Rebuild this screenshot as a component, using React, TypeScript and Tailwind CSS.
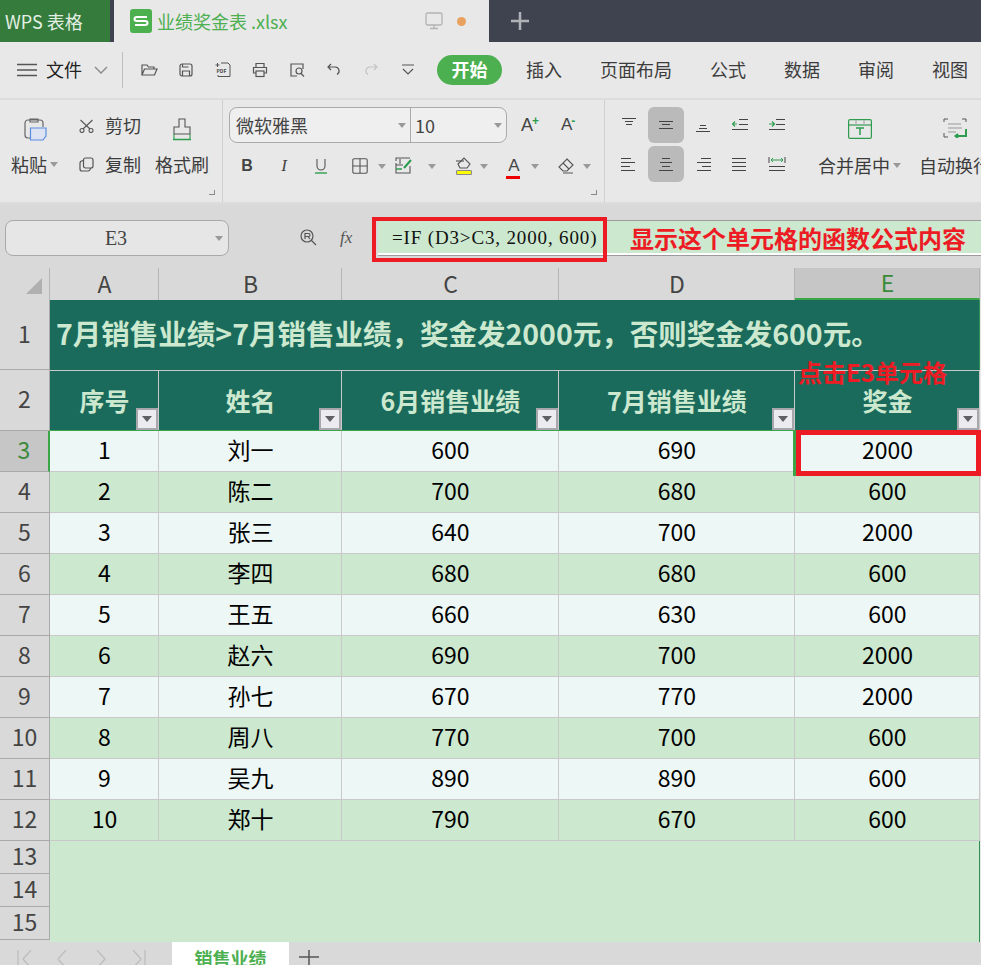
import type {ReactNode} from "react";

const ui = "font-['Noto_Sans_CJK_SC','Noto_Sans',sans-serif]";
const colWidths = ["w-[109px]", "w-[183px]", "w-[217px]", "w-[236px]", "w-[185px]"];

const rows = [
  ["1", "刘一", "600", "690", "2000"],
  ["2", "陈二", "700", "680", "600"],
  ["3", "张三", "640", "700", "2000"],
  ["4", "李四", "680", "680", "600"],
  ["5", "王五", "660", "630", "600"],
  ["6", "赵六", "690", "700", "2000"],
  ["7", "孙七", "670", "770", "2000"],
  ["8", "周八", "770", "700", "600"],
  ["9", "吴九", "890", "890", "600"],
  ["10", "郑十", "790", "670", "600"],
];

function Icon({size = 20, children}: {size?: number; children: ReactNode}) {
  return (
    <svg width={size} height={size} viewBox="0 0 20 20" fill="none" stroke="#555" strokeWidth="1.2">
      {children}
    </svg>
  );
}

function Caret({className = ""}: {className?: string}) {
  return <span className={`inline-block h-0 w-0 border-x-[4px] border-t-[5px] border-x-transparent border-t-[#999] ${className}`} />;
}

function Launcher() {
  return <span className="absolute bottom-[7px] right-[7px] h-[5px] w-[6px] border-b border-r border-[#888]" />;
}

function QuickIcons() {
  const icons = [
    <path key="open" d="M3 15V5h5l1.5 2H15v2M3 15l2.5-6H18l-2.5 6z" />,
    <g key="save"><rect x="4" y="4" width="12" height="12" rx="2" /><path d="M6.500 16v-5h7v5M6.500 4v3h6" /></g>,
    <g key="pdf"><path d="M8 3h7l2 2v11.500H5V15" strokeWidth="1" /><path d="M2.500 5h4M4.500 3v4" strokeWidth="1" /><text x="3.500" y="12.500" fontSize="5" fontWeight="700" fill="#444" stroke="none">PDF</text></g>,
    <g key="print"><path d="M6 7V3.500h8V7M6 13H3.500V7.500h13V13H14" /><rect x="6" y="11" width="8" height="5.500" /></g>,
    <g key="preview"><path d="M16 9V4H4v12h6" /><circle cx="12" cy="11" r="3" /><path d="m14 13.500 3 3" /></g>,
    <path key="undo" d="M7 4 4 7l3 3M4 7h7a4 4 0 0 1 2 7.500" />,
    <path key="redo" d="m13 4 3 3-3 3M16 7H9a4 4 0 0 0-2 7.500" stroke="#c4c4c4" />,
    <path key="more" d="M4 5h12M5 9l5 5 5-5" />,
  ];
  return (
    <div className="ml-[7px] flex">
      {icons.map((icon, i) => (
        <span key={i} className="flex w-[37px] justify-center">
          <Icon>{icon}</Icon>
        </span>
      ))}
    </div>
  );
}

function TopTabs() {
  return (
    <div className="flex h-[42px] bg-[#3f434f]">
      <div className="flex w-[110px] items-center bg-[#357c3c] pl-[5px] text-[18px] text-[#e3efe4]">WPS 表格</div>
      <div className="ml-[4px] flex w-[375px] items-center bg-[#e8e8e8] pl-[16px]">
        <span className="flex h-[24px] w-[22px] items-center justify-center rounded-[3px] bg-[#4cb04f]">
          <svg width="16" height="12" viewBox="0 0 16 12" fill="none" stroke="#fff" strokeWidth="2">
            <path d="M14 2H4Q1.500 2 1.500 4T4 6h8q2.500 0 2.500 2T12 10H2" />
          </svg>
        </span>
        <span className="ml-[5px] text-[18px] text-[#4caf50]">业绩奖金表 .xlsx</span>
        <span className="ml-[137px]">
          <svg width="18" height="18" viewBox="0 0 18 18" fill="none" stroke="#b3b3b3" strokeWidth="1.300">
            <rect x="1" y="1" width="16" height="12" rx="1.500" />
            <path d="M9 13v3.500M5 16.500h8" />
          </svg>
        </span>
        <span className="ml-[14px] h-[9px] w-[9px] rounded-full bg-[#e9a15f]" />
      </div>
      <div className="ml-[22px] flex items-center">
        <svg width="18" height="18" viewBox="0 0 18 18" stroke="#b0b2b8" strokeWidth="2.500">
          <path d="M9 0v18M0 9h18" />
        </svg>
      </div>
    </div>
  );
}

function MenuBar() {
  return (
    <div className="flex h-[58px] items-center border-b-[2px] border-[#dcdcdc] bg-[#e8e8e8] text-[18px] text-[#3c3c3c]">
      <svg className="ml-[17px]" width="20" height="14" viewBox="0 0 20 14" stroke="#555" strokeWidth="1.500">
        <path d="M0 1.500h20M0 7h20M0 12.500h20" />
      </svg>
      <span className="ml-[9px] pb-[2px] text-[#222]">文件</span>
      <svg className="ml-[12px]" width="14" height="8" viewBox="0 0 14 8" fill="none" stroke="#888" strokeWidth="1.300">
        <path d="m1 1 6 6 6-6" />
      </svg>
      <span className="ml-[14px] h-[36px] w-px bg-[#bdbdbd]" />
      <QuickIcons />
      <span className="ml-[11px] flex h-[30px] w-[65px] items-center justify-center rounded-full bg-[#4caf50] pb-[1px] font-bold text-white">开始</span>
      <div className="ml-[24px] flex gap-[38px] pb-[2px]">
        <span>插入</span>
        <span>页面布局</span>
        <span>公式</span>
        <span>数据</span>
        <span>审阅</span>
        <span>视图</span>
      </div>
    </div>
  );
}

function ClipboardGroup() {
  return (
    <div className="relative h-full w-[223px] shrink-0 border-r border-[#d0d0d0] text-[18px] text-[#3c3c3c]">
      <div className="flex pt-[16px]">
        <div className="flex w-[58px] flex-col items-start pl-[11px]">
          <svg className="ml-[11px] mt-[2px]" width="26" height="24" viewBox="0 0 26 24" fill="none">
            <path d="M6 2h12a3 3 0 0 1 3 3v4M6 2a3 3 0 0 0-3 3v12a3 3 0 0 0 3 3h2M8 1h8v3H8z" stroke="#666" strokeWidth="1.200" />
            <path d="M8.500 10h15.500v8l-3 4H8.500z" fill="#dde3f2" stroke="#5b8ee0" strokeWidth="1.200" />
          </svg>
          <span className="mt-[9px] flex items-center whitespace-nowrap">粘贴<Caret className="ml-[3px]" /></span>
        </div>
        <div className="ml-[21px] mt-[-3px] flex w-[76px] flex-col">
          <div className="flex h-[25px] items-center">
            <svg width="15" height="14" viewBox="0 0 15 14" fill="none" stroke="#555" strokeWidth="1.100">
              <path d="M13.500 1 4 10M1.500 1 11 10" />
              <circle cx="3" cy="11.500" r="2" />
              <circle cx="12" cy="11.500" r="2" />
            </svg>
            <span className="ml-[11px]">剪切</span>
          </div>
          <div className="mt-[14px] flex h-[25px] items-center">
            <svg width="15" height="15" viewBox="0 0 15 15" fill="none" stroke="#555" strokeWidth="1.200">
              <rect x="4.500" y="1" width="9.500" height="10" rx="2" />
              <path d="M4 3.500Q1 4 1 6v6q0 2 2 2h6q2 0 2.500-3" />
            </svg>
            <span className="ml-[11px]">复制</span>
          </div>
        </div>
        <div className="ml-[-3px] flex w-[60px] flex-col items-center">
          <svg className="mt-[2px]" width="20" height="24" viewBox="0 0 20 24" fill="none" stroke="#555" strokeWidth="1.100">
            <path d="M7 1h6v8h5v7H2V9h5z" />
            <path d="M1 21.500h18" stroke="#2e9c4e" strokeWidth="1.500" />
            <path d="M2 16v5M18 16v5" stroke="#2e9c4e" />
          </svg>
          <span className="mt-[9px] whitespace-nowrap">格式刷</span>
        </div>
      </div>
      <Launcher />
    </div>
  );
}

function FontGroup() {
  const tools = [
    <span key="b" className="w-[18px] text-center font-['Liberation_Sans',sans-serif] text-[16px] font-bold text-[#444]">B</span>,
    <span key="i" className="ml-[19px] w-[18px] text-center font-['Liberation_Serif',serif] text-[17px] italic text-[#444]">I</span>,
    <span key="u" className="ml-[19px] flex w-[18px] justify-center">
      <svg width="14" height="16" viewBox="0 0 14 16" fill="none" stroke="#555" strokeWidth="1.100">
        <path d="M3 1v7a4 4 0 0 0 8 0V1" />
        <path d="M1 15h12" stroke="#2e9c4e" strokeWidth="1.400" />
      </svg>
    </span>,
  ];
  return (
    <div className="relative h-full w-[382px] shrink-0 border-r border-[#d0d0d0] pl-[6px] pt-[7px]">
      <div className="flex items-center">
        <div className="flex h-[36px] w-[278px] rounded-[8px] border border-[#aaa] bg-[#efefef] text-[18px] text-[#444]">
          <div className="flex w-[181px] items-center justify-between border-r border-[#aaa] pl-[6px] pr-[4px]">
            微软雅黑<Caret />
          </div>
          <div className="flex flex-1 items-center justify-between pl-[4px] pr-[4px]">
            10<Caret />
          </div>
        </div>
        <span className="ml-[14px] flex h-[20px] w-[18px] font-['Liberation_Sans',sans-serif] text-[18px] leading-[20px] text-[#444]">
          A<span className="ml-[-1px] mt-[-4px] text-[12px] font-bold text-[#2e9c4e]">+</span>
        </span>
        <span className="ml-[22px] flex h-[20px] w-[16px] font-['Liberation_Sans',sans-serif] text-[17px] leading-[20px] text-[#444]">
          A<span className="ml-[-1px] mt-[-4px] text-[12px] font-bold text-[#2e9c4e]">-</span>
        </span>
      </div>
      <div className="ml-[9px] mt-[11px] flex h-[24px] items-center">
        {tools}
        <span className="ml-[21px]">
          <Icon size={18}><rect x="2" y="2" width="16" height="16" rx="1.500" /><path d="M10 2v16M2 10h16" /></Icon>
        </span>
        <Caret className="ml-[9px]" />
        <span className="ml-[9px]">
          <svg width="18" height="18" viewBox="0 0 18 18" fill="none" stroke="#555" strokeWidth="1.100">
            <path d="M1 4V1h14M1 6v10h14V9M1 8h7M5 2v5" />
            <path d="M1 12h6" stroke="#2e9c4e" strokeWidth="1.500" />
            <path d="m9 11 7-8" stroke="#2e9c4e" strokeWidth="2" />
          </svg>
        </span>
        <Caret className="ml-[15px]" />
        <span className="ml-[19px]">
          <svg width="18" height="20" viewBox="0 0 18 20" fill="none" stroke="#555" strokeWidth="1.100">
            <path d="m3 8 6-6 6 6-3 4H5z" />
            <path d="M1 5h8" />
            <rect x="1.500" y="14.500" width="15" height="4" rx="1" fill="#ffff00" stroke="#888" />
          </svg>
        </span>
        <Caret className="ml-[7px]" />
        <span className="relative ml-[19px] flex w-[14px] justify-center font-['Liberation_Sans',sans-serif] text-[17px] leading-[20px] text-[#444]">
          A<span className="absolute left-[-1px] top-[20px] h-[3px] w-[14px] bg-[#ee0000]" />
        </span>
        <Caret className="ml-[10px]" />
        <span className="ml-[19px]">
          <svg width="16" height="16" viewBox="0 0 16 16" fill="none" stroke="#555" strokeWidth="1.100">
            <path d="m9 1 6 6-6 6H5L1 9z" />
            <path d="m5 5 6 6M5 15h10" />
          </svg>
        </span>
        <Caret className="ml-[9px]" />
      </div>
      <Launcher />
    </div>
  );
}

function AlignLines({lines, children}: {lines: [number, number][]; children?: ReactNode}) {
  return (
    <svg width="16" height="16" viewBox="0 0 16 16" stroke="#444" strokeWidth="1">
      {lines.map(([y, w], i) => {
        const [x1, x2] = w < 0 ? [0, -w] : [16 - w, 16];
        return <path key={i} d={`M${x1} ${y}.5H${x2}`} />;
      })}
      {children}
    </svg>
  );
}

function AlignGroup() {
  const center = (y: number, w: number) => <path key={y} d={`M${8 - w / 2} ${y}.5h${w}`} />;
  const first = [
    <svg key="t" width="16" height="16" viewBox="0 0 16 16" stroke="#444">{center(1, 14)}{center(4, 8)}{center(7, 6)}</svg>,
    <svg key="m" width="16" height="16" viewBox="0 0 16 16" stroke="#444">{center(4, 14)}{center(7, 8)}{center(11, 14)}</svg>,
    <svg key="b" width="16" height="16" viewBox="0 0 16 16" stroke="#444">{center(8, 6)}{center(11, 8)}{center(14, 14)}</svg>,
    <AlignLines key="l" lines={[[2, 9], [7, 9], [12, 16]]}>
      <path d="M5 7H0M3 4.500 0.500 7 3 9.500" stroke="#2e9c4e" strokeWidth="1.200" fill="none" />
    </AlignLines>,
    <AlignLines key="r" lines={[[2, 9], [7, 9], [12, 16]]}>
      <path d="M0 7h5M3 4.500 5.500 7 3 9.500" stroke="#2e9c4e" strokeWidth="1.200" fill="none" />
    </AlignLines>,
  ];
  const second = [
    <AlignLines key="l" lines={[[2, -10], [6, -14], [10, -9], [14, -14]]} />,
    <svg key="c" width="16" height="16" viewBox="0 0 16 16" stroke="#444">{center(2, 8)}{center(6, 12)}{center(10, 8)}{center(14, 14)}</svg>,
    <AlignLines key="r" lines={[[2, 10], [6, 14], [10, 9], [14, 14]]} />,
    <AlignLines key="j" lines={[[2, -14], [6, -14], [10, -14], [14, -14]]} />,
    <svg key="d" width="18" height="16" viewBox="0 0 18 16" fill="none" stroke="#444">
      <path d="M1 10.500h16M1 14.500h16M1 1v6M17 1v6" />
      <path d="M3 4h12M5 2 3 4l2 2M13 2l2 2-2 2" stroke="#2e9c4e" />
    </svg>,
  ];
  const renderRow = (icons: ReactNode[]) => (
    <div className="flex">
      {icons.map((icon, i) => (
        <span key={i} className={`flex h-[36px] w-[36px] items-center justify-center rounded-[6px] ${i === 1 ? "bg-[#bababa]" : ""} ${i > 0 ? "ml-[1px]" : ""}`}>
          {icon}
        </span>
      ))}
    </div>
  );
  return (
    <div className="flex h-full w-[200px] shrink-0 flex-col gap-[3px] pl-[6px] pt-[7px]">
      {renderRow(first)}
      {renderRow(second)}
    </div>
  );
}

function MergeWrap() {
  return (
    <div className="flex h-full text-[18px] text-[#3c3c3c]">
      <div className="ml-[13px] flex w-[86px] shrink-0 flex-col items-start pt-[19px]">
        <svg className="ml-[30px]" width="24" height="20" viewBox="0 0 24 20" fill="none" stroke="#2e9c4e" strokeWidth="1.200">
          <rect x="0.600" y="0.600" width="22.800" height="18.800" rx="1.500" />
          <path d="M0.600 6h22.800" />
          <path d="M8 1v5M16 1v5" stroke="#aaa" />
          <path d="M8 9h8M12 9v7" strokeWidth="1.500" />
        </svg>
        <span className="mt-[13px] flex items-center whitespace-nowrap">合并居中<Caret className="ml-[3px]" /></span>
      </div>
      <div className="ml-[15px] flex flex-col pt-[18px]">
        <svg className="ml-[24px]" width="24" height="20" viewBox="0 0 24 20" fill="none" stroke="#555" strokeWidth="1">
          <path d="M5 1H1v3M1 15v4h4M19 1h4v3" />
          <path d="M5 6h13M5 10h14M5 14h8" stroke="#999" />
          <path d="M23 11v7H13M15 16l-2.500 2 2.500 2" stroke="#2e9c4e" strokeWidth="2" />
        </svg>
        <span className="mt-[14px] whitespace-nowrap">自动换行</span>
      </div>
    </div>
  );
}

function Ribbon() {
  return (
    <div className="flex h-[104px] overflow-hidden border-b-[2px] border-[#dcdcdc] bg-[#e8e8e8]">
      <ClipboardGroup />
      <FontGroup />
      <AlignGroup />
      <MergeWrap />
    </div>
  );
}

function FormulaBar() {
  return (
    <div className="relative flex h-[64px] items-center bg-[#d9d9d9] pt-[4px]">
      <div className="relative ml-[5px] flex h-[36px] w-[224px] items-center justify-center rounded-[8px] border border-[#aaa] bg-[#e6e6e6] pr-[2px] font-['Liberation_Serif',serif] text-[20px] text-[#444]">
        E3
        <Caret className="absolute right-[5px] top-[15px]" />
      </div>
      <svg className="ml-[71px]" width="17" height="18" viewBox="0 0 17 18" fill="none" stroke="#555" strokeWidth="1.200">
        <circle cx="7" cy="7" r="6" />
        <path d="M5 10V4.500h3.500a1.500 1.500 0 0 1 0 3H5M8 7.500l2 2.500M11 11l5 5" />
      </svg>
      <span className="ml-[23px] w-[18px] font-['Liberation_Serif',serif] text-[17px] italic text-[#555]">fx</span>
      <div className="ml-[20px] flex h-[36px] flex-1 items-center overflow-hidden whitespace-nowrap border-y border-y-[#9b9b9b] bg-[#cce8cf] shadow-[inset_0_-2px_0_#fff]">
        <span className="ml-[14px] w-[238px] shrink-0 font-['Liberation_Serif',serif] text-[19px] tracking-[0.85px] text-[#111]">=IF (D3&gt;C3, 2000, 600)</span>
        <span className="text-[24px] font-bold leading-none text-[#ed1c24]">显示这个单元格的函数公式内容</span>
      </div>
      <div className="absolute left-[372px] top-[13px] h-[45px] w-[235px] border-[4px] border-[#ed1c24]" />
    </div>
  );
}

function FilterButton() {
  return (
    <span className="absolute bottom-0 right-0 flex h-[22px] w-[22px] items-center justify-center border-2 border-[#a7a7ad] bg-[#ebebf0] pt-0">
      <span className="h-0 w-0 border-x-[5px] border-t-[6px] border-x-transparent border-t-[#5f5f66]" />
    </span>
  );
}

function RowHead({label, height, active}: {label: string; height: string; active?: boolean}) {
  return (
    <div className={`flex w-[50px] shrink-0 items-center justify-center border-b pb-[3px] text-[23px] ${height} ${active ? "border-r-2 border-b-[#a9a9a9] border-r-[#3aa648] bg-[#c6c6c6] text-[#3a8a3a]" : "border-r border-[#a9a9a9] bg-[#d9d9d9] text-[#444]"}`}>
      {label}
    </div>
  );
}

function Sheet() {
  const headers = ["序号", "姓名", "6月销售业绩", "7月销售业绩", "奖金"];
  return (
    <div className="relative">
      <div className="flex h-[32px] bg-[#d9d9d9] pb-0 text-[23px] text-[#444]">
        <div className="relative w-[50px] shrink-0 border-r border-[#b5b5b5]">
          <span className="absolute bottom-[6px] right-[7px] h-0 w-0 border-b-[16px] border-l-[16px] border-b-[#b0b0b0] border-l-transparent" />
        </div>
        {["A", "B", "C", "D", "E"].map((c, i) => (
          <div
            key={c}
            className={`flex items-center justify-center border-r border-[#b5b5b5] pb-[1px] pl-[1px] ${colWidths[i]} ${c === "E" ? "border-b-2 border-b-[#3aa648] bg-[#c6c6c6] text-[#3a8a3a]" : ""}`}
          >
            {c}
          </div>
        ))}
      </div>

      <div className="flex">
        <RowHead label="1" height="h-[70px]" />
        <div className="flex w-[930px] items-center border-r border-[#2f8f55] bg-[#1a6b5c] pb-[3px] pl-[6px] text-[28.5px] font-bold text-[#cce8cf]">
          7月销售业绩&gt;7月销售业绩，奖金发2000元，否则奖金发600元。
        </div>
      </div>

      <div className="flex">
        <RowHead label="2" height="h-[61px]" />
        <div className="flex border-b border-[#3aa648] border-t border-t-[#c9c9c9]">
          {headers.map((h, i) => (
            <div key={h} className={`relative flex h-[59px] items-center justify-center border-r border-[#c9c9c9] bg-[#1a6b5c] pl-[1px] text-[25px] font-bold text-[#cce8cf] ${colWidths[i]}`}>
              {h}
              <FilterButton />
            </div>
          ))}
        </div>
      </div>

      {rows.map((row, r) => (
        <div key={row[0]} className="flex">
          <RowHead label={String(r + 3)} height="h-[41px]" active={r === 0} />
          {row.map((cell, i) => (
            <div
              key={i}
              className={`flex h-[41px] items-center justify-center border-b border-r border-[#c9c9c9] pb-[3px] pl-[1px] text-[23px] text-black ${colWidths[i]} ${r % 2 === 0 ? "bg-[#edf7f5]" : "bg-[#cce8cf]"}`}
            >
              {cell}
            </div>
          ))}
        </div>
      ))}

      <div className="flex">
        <div className="w-[50px] shrink-0 bg-[#d9d9d9] pb-[2px]">
          <RowHead label="13" height="h-[33px]" />
          <RowHead label="14" height="h-[33px]" />
          <RowHead label="15" height="h-[33px]" />
        </div>
        <div className="w-[930px] border-r border-[#2f8f55] bg-[#cce8cf]" />
      </div>

      {/* 标注，盖在表格上 */}
      <span className="absolute left-[798px] top-[92px] text-[24px] font-bold leading-none text-[#ed1c24]">点击E3单元格</span>
      <div className="absolute left-[796px] top-[162px] h-[46px] w-[185px] border-[5px] border-[#ed1c24] shadow-[-3px_0_0_#3aa648]" />
    </div>
  );
}

function SheetTabs() {
  return (
    <div className="flex h-[23px] overflow-hidden bg-[#d9d9d9]">
      <svg className="ml-[17px] mt-[8px]" width="130" height="17" viewBox="0 0 130 17" fill="none" stroke="#bdbdbd" strokeWidth="1.300">
        <path d="M1 0v17M14 0 6 9l8 9M49 0l-8 9 8 9M80 0l8 9-8 9M116 0l8 9-8 9M128 0v17" />
      </svg>
      <div className="ml-[25px] flex w-[117px] justify-center bg-white pt-[2px] text-[18px] font-bold leading-[28px] text-[#4caf50]">销售业绩</div>
      <svg className="ml-[10px] mt-[8px]" width="20" height="17" viewBox="0 0 20 17" stroke="#555" strokeWidth="1.500">
        <path d="M10 0v17M0 7h20" />
      </svg>
    </div>
  );
}

export default function App() {
  return (
    <div className={`h-[965px] w-[981px] overflow-hidden bg-[#e8e8e8] ${ui}`}>
      <TopTabs />
      <MenuBar />
      <Ribbon />
      <FormulaBar />
      <Sheet />
      <SheetTabs />
    </div>
  );
}
